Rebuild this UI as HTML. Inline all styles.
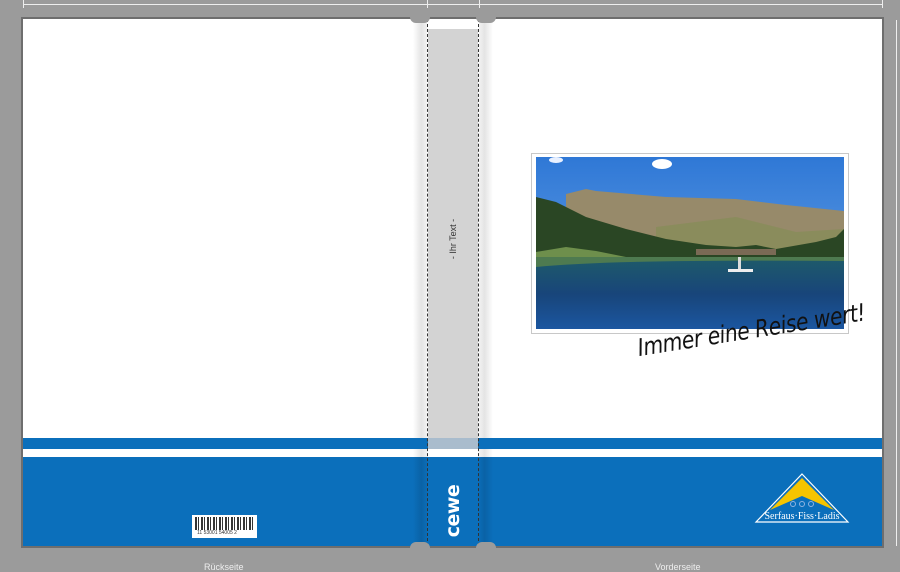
<!DOCTYPE html>
<html><head><meta charset="utf-8"><style>
*{margin:0;padding:0;box-sizing:border-box}
body{width:900px;height:567px;background:#9b9b9b;position:relative;overflow:hidden;font-family:"Liberation Sans",sans-serif}
.a{position:absolute}
</style></head><body>
<div class="a" style="left:23px;top:4px;width:860px;height:1px;background:#eee"></div>
<div class="a" style="left:23px;top:0;width:1px;height:8px;background:#eee"></div>
<div class="a" style="left:427px;top:0;width:1px;height:8px;background:#eee"></div>
<div class="a" style="left:479px;top:0;width:1px;height:8px;background:#eee"></div>
<div class="a" style="left:882px;top:0;width:1px;height:8px;background:#eee"></div>
<div class="a" style="left:896px;top:20px;width:1px;height:526px;background:#eee"></div>
<div class="a" style="left:21px;top:17px;width:863px;height:531px;background:#6e6e6e"></div>
<div class="a" style="left:23px;top:19px;width:859px;height:527px;background:#fff"></div>
<div class="a" style="left:413px;top:19px;width:14px;height:527px;background:linear-gradient(90deg,#fff,#e4e4e4 60%,#f2f2f2)"></div>
<div class="a" style="left:479px;top:19px;width:14px;height:527px;background:linear-gradient(90deg,#f2f2f2,#e4e4e4 40%,#fff)"></div>
<div class="a" style="left:428px;top:29px;width:50px;height:409px;background:#d3d3d3"></div>
<div class="a" style="left:428px;top:438px;width:50px;height:11px;background:#a9bccd"></div>
<div class="a" style="left:23px;top:438px;width:405px;height:11px;background:#0b6fbb"></div>
<div class="a" style="left:478px;top:438px;width:404px;height:11px;background:#0b6fbb"></div>
<div class="a" style="left:23px;top:457px;width:859px;height:89px;background:#0b6fbb"></div>
<div class="a" style="left:413px;top:457px;width:14px;height:89px;background:linear-gradient(90deg,#0b6fbb,#0a62a6 60%,#0b6cb6)"></div>
<div class="a" style="left:479px;top:457px;width:14px;height:89px;background:linear-gradient(90deg,#0b6cb6,#0a62a6 40%,#0b6fbb)"></div>
<div class="a" style="left:427px;top:19px;width:0;height:527px;border-left:1px dashed #333"></div>
<div class="a" style="left:478px;top:19px;width:0;height:527px;border-left:1px dashed #333"></div>
<div class="a" style="left:410px;top:17px;width:20px;height:6px;background:#9b9b9b;border-radius:0 0 10px 10px"></div>
<div class="a" style="left:476px;top:17px;width:20px;height:6px;background:#9b9b9b;border-radius:0 0 10px 10px"></div>
<div class="a" style="left:410px;top:542px;width:20px;height:6px;background:#9b9b9b;border-radius:10px 10px 0 0"></div>
<div class="a" style="left:476px;top:542px;width:20px;height:6px;background:#9b9b9b;border-radius:10px 10px 0 0"></div>
<div class="a" style="left:403px;top:234px;width:100px;text-align:center;font-size:9px;color:#333;transform:rotate(-90deg)">- Ihr Text -</div>
<div class="a" style="left:413px;top:500px;width:80px;text-align:center;font-size:19px;font-weight:bold;color:#fff;transform:rotate(-90deg);font-family:'DejaVu Sans',sans-serif;letter-spacing:-0.5px">cewe</div>
<div class="a" style="left:192px;top:515px;width:65px;height:23px;background:#fff"></div>
<div class="a" style="left:195px;top:517px;width:59px;height:13px;background:repeating-linear-gradient(90deg,#111 0 2px,#fff 2px 3px,#111 3px 4px,#fff 4px 6px),#111;opacity:.85"></div>
<div class="a" style="left:197px;top:530px;font-size:5px;color:#333">11 53001 54005 2</div>
<div class="a" style="left:204px;top:562px;font-size:9px;color:#eee">Rückseite</div>
<div class="a" style="left:655px;top:562px;font-size:9px;color:#eee">Vorderseite</div>
<div class="a" style="left:531px;top:153px;width:318px;height:181px;background:#fff;border:1px solid #c8c8c8"></div>
<svg class="a" style="left:536px;top:157px" width="308" height="172" viewBox="0 0 308 172">
<defs>
<linearGradient id="sk" x1="0" y1="0" x2="0" y2="1"><stop offset="0" stop-color="#2f78d6"/><stop offset="1" stop-color="#6ea6e6"/></linearGradient>
<linearGradient id="lk" x1="0" y1="0" x2="0" y2="1"><stop offset="0" stop-color="#1e5a6a"/><stop offset=".5" stop-color="#18457a"/><stop offset="1" stop-color="#1b56a0"/></linearGradient>
</defs>
<rect width="308" height="172" fill="url(#sk)"/>
<ellipse cx="126" cy="7" rx="10" ry="5" fill="#fff"/>
<ellipse cx="20" cy="3" rx="7" ry="3" fill="#e8f0ff"/>
<path d="M30 37 L50 32 L60 34 L130 40 L200 42 L250 48 L308 54 L308 100 L30 100 Z" fill="#978a6a"/>
<path d="M120 70 L200 60 L260 75 L308 72 L308 100 L120 100Z" fill="#8a8c5c"/>
<path d="M0 40 L20 45 L50 60 L90 72 L130 82 L170 88 L200 90 L220 88 L240 92 L280 85 L300 80 L308 72 L308 110 L0 115Z" fill="#2a4624"/>
<path d="M0 95 L30 90 L60 94 L90 100 L40 110 L0 112Z" fill="#6e8f4c"/>
<rect x="0" y="102" width="308" height="70" fill="url(#lk)"/>
<path d="M0 110 Q80 102 308 104 L308 100 L0 100Z" fill="#4e7a50"/>
<rect x="160" y="92" width="80" height="6" fill="#7a6a55"/>
<rect x="202" y="100" width="3" height="12" fill="#ddd"/>
<rect x="192" y="112" width="25" height="3" fill="#eee"/>
</svg>
<div class="a" style="left:640px;top:334px;font-family:'DejaVu Sans',sans-serif;font-style:italic;font-size:24px;color:#111;transform:rotate(-9deg) scaleX(0.85);transform-origin:left bottom;white-space:nowrap;letter-spacing:-0.5px">Immer eine Reise wert!</div>
<svg class="a" style="left:754px;top:472px" width="96" height="52" viewBox="0 0 96 52">
<path d="M48 2 L94 50 L2 50 Z" fill="none" stroke="#fff" stroke-width="1.2"/>
<path d="M48 6 L80 38 L48 24 L16 38 Z" fill="#f6c400"/>
<circle cx="39" cy="32" r="2.5" fill="none" stroke="#8fb3e0"/><circle cx="48" cy="32" r="2.5" fill="none" stroke="#8fb3e0"/><circle cx="57" cy="32" r="2.5" fill="none" stroke="#8fb3e0"/>
<text x="48" y="47" text-anchor="middle" font-family="Liberation Serif,serif" font-size="10" fill="#fff">Serfaus·Fiss·Ladis</text>
</svg>
</body></html>
